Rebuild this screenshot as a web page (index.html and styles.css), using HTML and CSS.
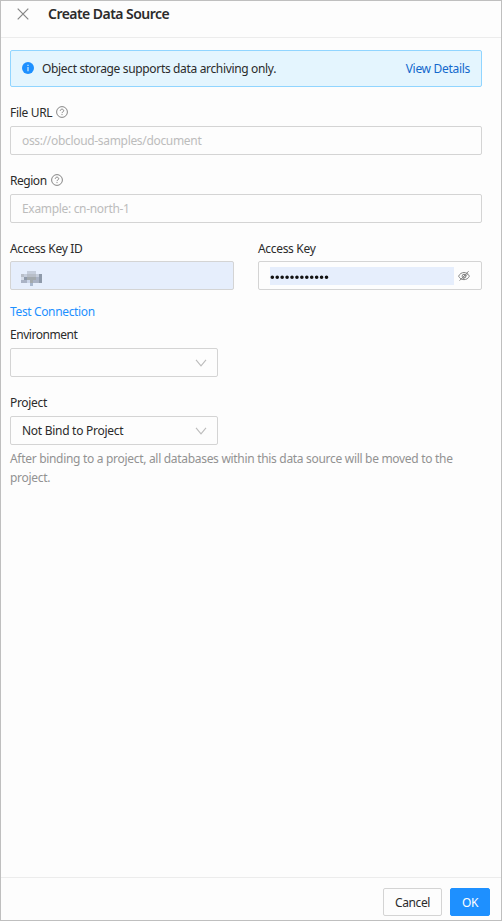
FILE: index.html
```html
<!DOCTYPE html>
<html lang="en">
<head>
	<meta charset="utf-8">
	<title>Create Data Source</title>
	<link rel="stylesheet" href="styles.css">
</head>
<body>
<div class="drawer">
	<div class="header">
		<svg class="close" viewBox="0 0 12 12"><path d="M.7.7l10.6 10.6M11.3.7L.7 11.3"/></svg>
		<span class="title">Create Data Source</span>
	</div>
	<div class="content">
		<div class="alert">
			<svg class="info" viewBox="0 0 12 12"><circle cx="6" cy="6" r="6"/><path d="M6 2.8v1.2M6 5v4.2"/></svg>
			<span class="alert_text">Object storage supports data archiving only.</span>
			<a class="alert_link">View Details</a>
		</div>
		<div class="item">
			<div class="label"><span>File URL</span>
				<svg class="help" viewBox="0 0 12 12"><circle cx="6" cy="6" r="5.4"/><path d="M4.3 4.8c0-2.2 3.4-2.2 3.4 0 0 1.1-1.7 1.1-1.7 2.3M6 8.1v1"/></svg>
			</div>
			<div class="input placeholder"><span>oss://obcloud-samples/document</span></div>
		</div>
		<div class="item">
			<div class="label tight"><span>Region</span>
				<svg class="help" viewBox="0 0 12 12"><circle cx="6" cy="6" r="5.4"/><path d="M4.3 4.8c0-2.2 3.4-2.2 3.4 0 0 1.1-1.7 1.1-1.7 2.3M6 8.1v1"/></svg>
			</div>
			<div class="input placeholder"><span>Example: cn-north-1</span></div>
		</div>
		<div class="row">
			<div class="item">
				<div class="label"><span>Access Key ID</span></div>
				<div class="input filled">
					<svg class="mosaic" viewBox="0 0 22 16" shape-rendering="crispEdges">
						<path fill="#c5cddb" d="M6 1h9v3H6zM3 4h3v3H3zM15 4h3v3h-3z"/>
						<path fill="#b8bec8" d="M0 4h3v3H0zM6 4h9v3H6z"/>
						<path fill="#d4dbe8" d="M0 7h3v3H0z"/>
						<path fill="#8f9aaa" d="M3 7h3v3H3zM18 4h3v9h-3z"/>
						<path fill="#a3a9ad" d="M6 7h9v3H6zM9 10h3v3H9z"/>
						<path fill="#aab3c5" d="M0 10h6v3H0zM12 10h6v3h-6zM15 7h3v3h-3z"/>
						<path fill="#cbd5e8" d="M6 10h3v3H6z"/>
						<path fill="#a9b8cf" d="M9 13h3v3H9z"/>
					</svg>
				</div>
			</div>
			<div class="item">
				<div class="label"><span>Access Key</span></div>
				<div class="input">
					<div class="secret">
						<svg class="dots" viewBox="0 0 60 18"><path d="M2.3 10.3H58"/></svg>
					</div>
					<svg class="eye" viewBox="0 0 12 12"><path d="M.6 6.2C2.8 1.3 9.2 1.3 11.4 6.2 9.2 10.8 2.8 10.8.6 6.2zM1.6 10.6L10.6 1.2"/><path d="M4.1 6.2a1.9 1.9 0 1 1 3.8 0 1.9 1.9 0 1 1-3.8 0zM4.1 9.7l5.7-5.9"/></svg>
				</div>
			</div>
		</div>
		<a class="test">Test Connection</a>
		<div class="item env">
			<div class="label tight"><span>Environment</span></div>
			<div class="input select">
				<svg class="arrow" viewBox="0 0 12 8"><path d="M1 .8l5 6 5-6"/></svg>
			</div>
		</div>
		<div class="item">
			<div class="label"><span>Project</span></div>
			<div class="input select">
				<span>Not Bind to Project</span>
				<svg class="arrow" viewBox="0 0 12 8"><path d="M1 .8l5 6 5-6"/></svg>
			</div>
			<div class="extra">After binding to a project, all databases within this data source will be moved to the<br>project.</div>
		</div>
	</div>
	<div class="footer">
		<div class="btn">Cancel</div>
		<div class="btn primary">OK</div>
	</div>
</div>
</body>
</html>
```
FILE: styles.css
```css
* { box-sizing: border-box; }
body { margin: 0; color: #2b2b2b; font-size: 12px; font-family: "Noto Sans", "Open Sans", sans-serif; }
svg { display: block; flex: none; fill: none; }
span, a { white-space: nowrap; }

/* =====drawer===== */
.drawer { display: flex; flex-direction: column; height: 921px; border: 1px solid #bfbfbf; background: #fdfdfd; }
.header { display: flex; align-items: center; height: 37px; padding: 0 16px 10px; border-bottom: 1px solid #ececec; }
.close { width: 12px; height: 12px; stroke: #858585; stroke-width: 1.2; }
.title { margin-left: 19px; font-size: 14px; font-weight: 600; line-height: 22px; letter-spacing: -0.54px; }

/* =====form===== */
.content { flex: 1; padding: 12px 19px 0 9px; }
.alert { display: flex; align-items: center; height: 37px; padding: 0 11px; border: 1px solid #91d5ff; border-radius: 2px; background: #e4f5fe; }
.info { width: 12px; height: 12px; margin-bottom: 2px; fill: #1e90ff; stroke: #e4f5fe; stroke-width: 1.1; }
.info circle { stroke: none; }
.alert_text { margin-left: 8px; letter-spacing: -0.34px; }
.alert_link { margin-left: auto; color: #1268cc; letter-spacing: -0.3px; }
.item { margin-top: 16px; }
.label { display: flex; align-items: center; height: 20px; padding-bottom: 2px; margin-bottom: 3px; letter-spacing: -0.32px; }
.tight { letter-spacing: -0.46px; }
.help { width: 12px; height: 12px; margin-left: 4px; stroke: #858585; stroke-width: 1; }
.input { display: flex; align-items: center; height: 29px; padding: 0 11px; border: 1px solid #d4d4d4; border-radius: 2px; letter-spacing: -0.28px; }
.placeholder { color: #bcbcbc; letter-spacing: -0.32px; }
.row { display: grid; grid-template-columns: 224px 224px; gap: 24px; }
.row .label { margin-bottom: 2px; }
.filled { padding-left: 10px; background: #e6eefc; }
.mosaic { width: 22px; height: 16px; margin-top: 4px; }
.secret { flex: 1; height: 18px; margin-right: 4px; background: #e6eefc; }
.dots { width: 60px; height: 18px; stroke: #111; stroke-width: 3.6; stroke-linecap: round; stroke-dasharray: 0 4.93; }
.eye { width: 12px; height: 12px; stroke: #858585; stroke-width: 1; }
.test { display: block; height: 20px; margin-top: 12px; color: #1e90ff; line-height: 20px; letter-spacing: -0.36px; }
.env { margin-top: 3px; }
.select { width: 208px; }
.arrow { width: 12px; height: 8px; margin: 0 -1px 0 auto; stroke: #bcbcbc; stroke-width: 1.1; }
.extra { margin-top: 4px; color: #929292; line-height: 19px; white-space: nowrap; letter-spacing: -0.305px; }

/* =====footer===== */
.footer { display: flex; justify-content: flex-end; gap: 8px; height: 43px; padding: 10px 11px 0; border-top: 1px solid #ececec; }
.btn { width: 59px; height: 28px; border: 1px solid #d4d4d4; border-radius: 2px; line-height: 27px; text-align: center; letter-spacing: -0.4px; }
.primary { width: 40px; border-color: #1e90ff; background: #1e90ff; color: #fff; }
```
